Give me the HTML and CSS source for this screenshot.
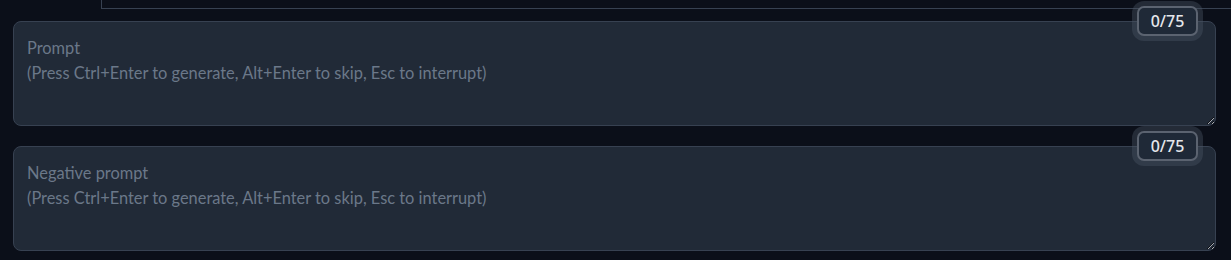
FILE: index.html
```html
<!DOCTYPE html>
<html>
<head>
<meta charset="utf-8">
<link rel="stylesheet" href="styles.css">
</head>
<body>
<div class="tabs">
  <div class="tab-active"></div>
  <div class="tab-rest"></div>
</div>
<div class="prompts">
  <div class="prompt-box">
    <textarea class="prompt" rows="4" placeholder="Prompt&#10;(Press Ctrl+Enter to generate, Alt+Enter to skip, Esc to interrupt)"></textarea>
    <div class="token-counter">0/75</div>
  </div>
  <div class="prompt-box">
    <textarea class="prompt" rows="4" placeholder="Negative prompt&#10;(Press Ctrl+Enter to generate, Alt+Enter to skip, Esc to interrupt)"></textarea>
    <div class="token-counter">0/75</div>
  </div>
</div>
</body>
</html>
```
FILE: styles.css
```css
html, body {
  margin: 0;
  padding: 0;
  background: #0b0f19;
  color-scheme: dark;
  font-family: "Lato", "Noto Sans", sans-serif;
}
.tabs {
  display: flex;
  height: 9px;
}
.tab-active {
  width: 101px;
  flex: none;
}
.tab-rest {
  flex: 1;
  border-left: 1px solid #374151;
  border-bottom: 1px solid #374151;
}
.prompts {
  display: flex;
  flex-direction: column;
  gap: 20px;
  padding: 12px 15px 0 13px;
}
.prompt-box {
  position: relative;
  display: flex;
}
.prompt {
  flex: 1;
  box-sizing: border-box;
  height: 105px;
  margin: 0;
  padding: 13px 13px;
  background: #212a37;
  border: 1px solid #374151;
  border-radius: 8px;
  color: #e5e7eb;
  font-family: "Lato", "Noto Sans", sans-serif;
  font-size: 16.4px;
  line-height: 25px;
  resize: vertical;
  outline: none;
}
.prompt::placeholder {
  color: #6b7889;
  opacity: 1;
}
.token-counter {
  position: absolute;
  top: -15px;
  right: 18px;
  box-sizing: border-box;
  width: 61px;
  height: 30px;
  display: flex;
  align-items: center;
  justify-content: center;
  background: #1f2937;
  border: 2px solid #5b6370;
  border-radius: 7px;
  box-shadow: 0 0 0 5px rgba(75, 85, 99, 0.4);
  color: #e5e7eb;
  font-family: "Noto Sans", sans-serif;
  font-size: 16px;
  font-weight: 500;
}
```
